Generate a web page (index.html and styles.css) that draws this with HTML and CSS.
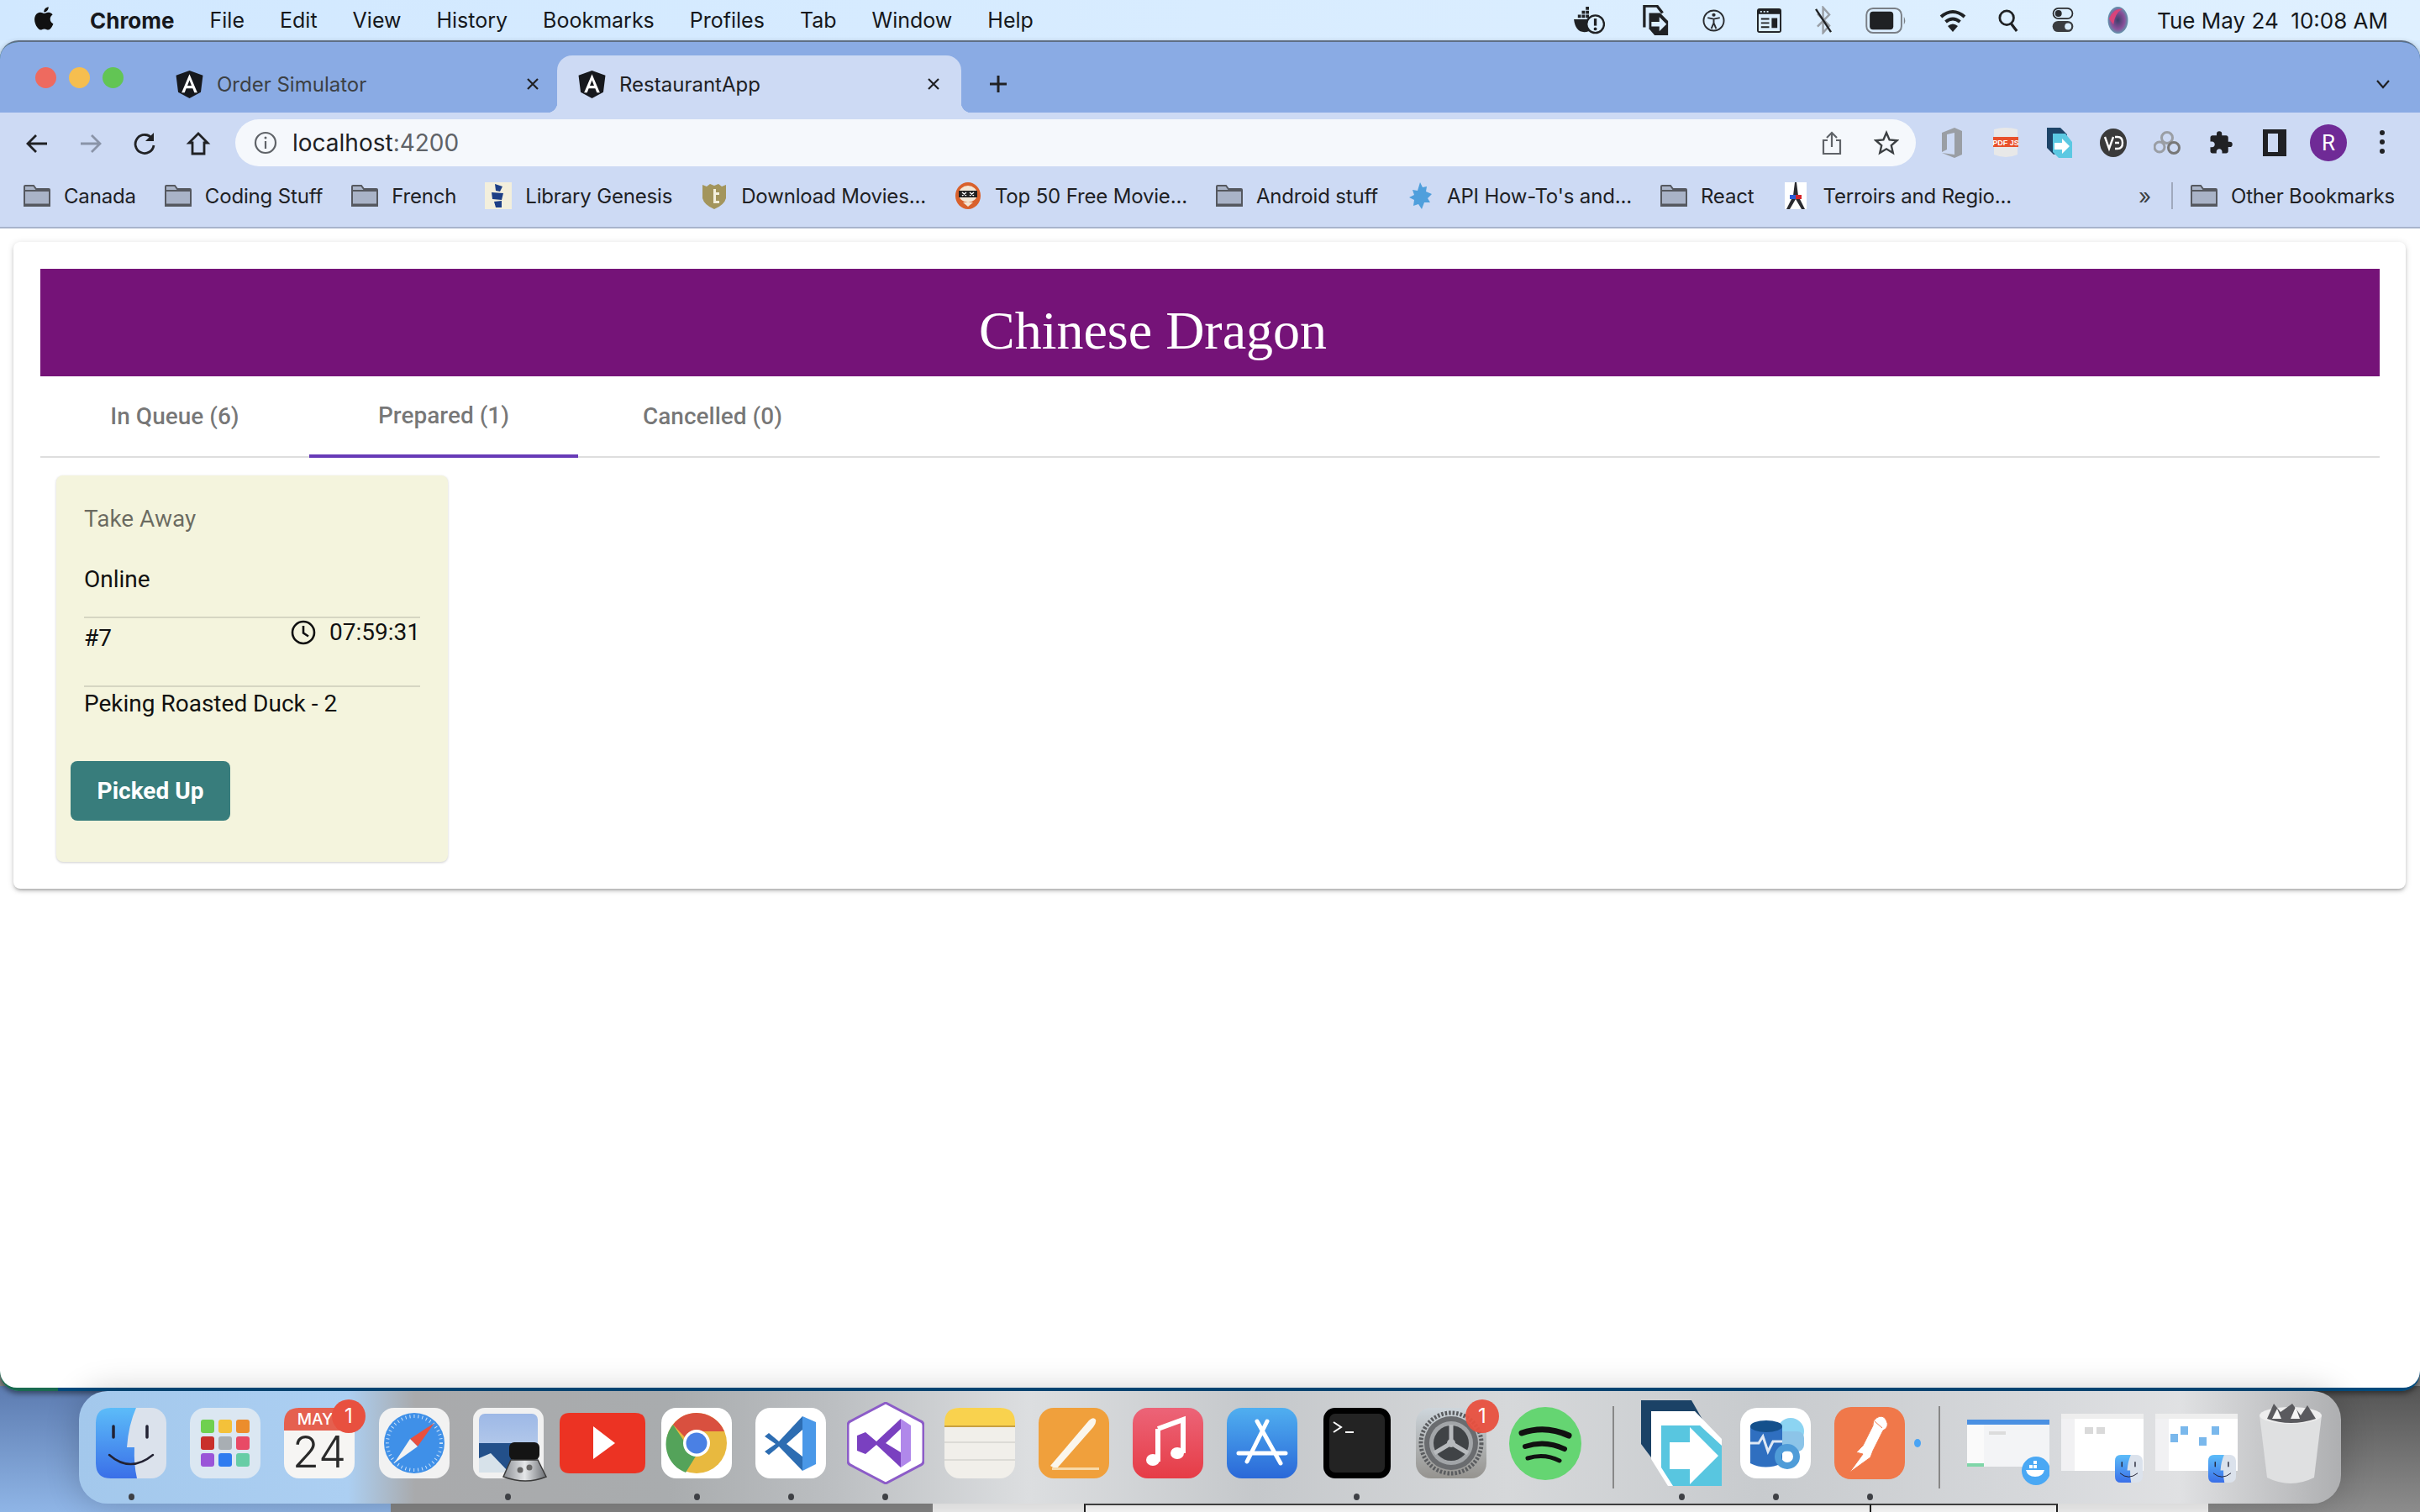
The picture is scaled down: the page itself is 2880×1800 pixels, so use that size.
FILE: index.html
```html
<!DOCTYPE html>
<html>
<head>
<meta name="viewport" content="width=device-width, initial-scale=1">
<title>RestaurantApp</title>
<link rel="stylesheet" href="styles.css">
</head>
<body>

<svg class="sprites" width="0" height="0">
  <defs>
    <linearGradient id="finderblue" x1="0" y1="0" x2="0" y2="1"><stop offset="0" stop-color="#5cbcf9"/><stop offset="1" stop-color="#3a6fe8"/></linearGradient>
    <symbol id="ng" viewBox="0 0 24 24">
      <path d="M12 0 23.6 4.2 21.8 18.8 12 24 2.2 18.8.4 4.2z" fill="#16181d"/>
      <path d="M12 3 5.2 19h2.6l1.4-3.6h5.6l1.4 3.6h2.6zM10.2 13 12 8.4 13.800 13z" fill="#fff"/>
    </symbol>
    <symbol id="folder" viewBox="0 0 32 26">
      <path d="M1 25V2q0-1 1-1h10l3 4h15q1 0 1 1v19z" fill="#a9b3c7" stroke="#55585f" stroke-width="2"/>
      <path d="M1 7h30" stroke="#55585f" stroke-width="2"/>
      <path d="M1 24h30" stroke="#55585f" stroke-width="3"/>
    </symbol>
    <symbol id="finder" viewBox="0 0 84 84">
      <rect width="84" height="84" rx="18" fill="#dbe2ec"/>
      <path d="M18 0h30q-9 20-11 47h9q-1 20 3 37H18Q0 84 0 66V18Q0 0 18 0z" fill="url(#finderblue)"/>
      <path d="M21 22v13M61 22v13" stroke="#223" stroke-width="3.500" stroke-linecap="round"/>
      <path d="M16 56q25 22 52 0" fill="none" stroke="#223" stroke-width="2.500" stroke-linecap="round"/>
    </symbol>
  </defs>
</svg>

<div class="desktop">

  <div class="bg-window">
    <div class="bg-cell bg-cell-a"></div>
    <div class="bg-cell bg-cell-b">them to reach and manage the application is 251045 file</div>
    <div class="bg-cell bg-cell-c">T</div>
  </div>

  <header class="menubar">
    <svg class="apple" viewBox="0 0 24 24"><path d="M17.05 12.54c-.03-2.6 2.12-3.85 2.22-3.91-1.21-1.77-3.09-2.01-3.76-2.04-1.6-.16-3.12.94-3.93.94-.81 0-2.06-.92-3.39-.89-1.74.03-3.35 1.01-4.25 2.57-1.81 3.14-.46 7.8 1.3 10.35.86 1.25 1.89 2.65 3.24 2.6 1.3-.05 1.79-.84 3.36-.84 1.57 0 2.01.84 3.39.81 1.4-.02 2.28-1.27 3.14-2.53.99-1.45 1.4-2.85 1.42-2.92-.03-.01-2.72-1.04-2.74-4.14zM14.47 4.9c.72-.87 1.2-2.08 1.07-3.28-1.03.04-2.28.69-3.02 1.55-.66.77-1.24 2-1.09 3.18 1.15.09 2.32-.58 3.04-1.45z" fill="#111"/></svg>
    <nav class="menu">
      <b>Chrome</b><span>File</span><span>Edit</span><span>View</span><span>History</span><span>Bookmarks</span><span>Profiles</span><span>Tab</span><span>Window</span><span>Help</span>
    </nav>
    <div class="status">
      <!-- docker with warning -->
      <svg class="docker" width="38" height="34" viewBox="0 0 40 36"><path d="M1 17h26q0 5-2 9l-1 4q-4 3-10 3Q3 33 1 17z" fill="#1f2124"/><path d="M6 11h4v4H6zM11 11h4v4h-4zM16 11h4v4h-4zM16 6h4v4h-4zM16 1h4v4h-4zM11 6h4v4h-4z" fill="#1f2124"/><circle cx="28" cy="23" r="11" fill="#dbeeff" stroke="#1f2124" stroke-width="2.500"/><path d="M28 16v9" stroke="#1f2124" stroke-width="3.500"/><circle cx="28" cy="29" r="2" fill="#1f2124"/></svg>
      <!-- arrow doc -->
      <svg width="32" height="36" viewBox="0 0 34 38"><path d="M2 28V1h16l7 9" fill="none" stroke="#1f2124" stroke-width="3.500"/><path d="M8 10h14l10 10v18H15l-7-8z" fill="#1f2124"/><path d="M11 21h10v-6l9 9-9 9v-6H11z" fill="#dbeeff"/></svg>
      <!-- accessibility -->
      <svg width="27" height="27" viewBox="0 0 28 28"><circle cx="14" cy="14" r="12.500" fill="none" stroke="#2a2c30" stroke-width="2"/><circle cx="14" cy="7" r="2.200" fill="#2a2c30"/><path d="M6.500 10.500 14 12l7.500-1.500M14 12v5l-3 7M14 17l3 7" fill="none" stroke="#2a2c30" stroke-width="2"/></svg>
      <!-- command window -->
      <svg width="29" height="29" viewBox="0 0 30 30"><rect width="30" height="30" rx="3" fill="#1f2124"/><rect x="2" y="7" width="26" height="21" fill="#dbeeff"/><path d="M5 12h10v2H5zM5 17h10v2H5zM5 22h10v2H5zM18 12h7v12h-7z" fill="#1f2124"/><path d="M4 3h2v2H4zM8 3h2v2H8zM12 3h2v2h-2z" fill="#dbeeff"/></svg>
      <!-- bluetooth off -->
      <svg width="23" height="34" viewBox="0 0 24 36"><path d="M4 10 19 25 11 34V2l8 9L4 26" fill="none" stroke="#999ea5" stroke-width="2.500"/><path d="M2 4 21 33" stroke="#1f2124" stroke-width="2.500"/></svg>
      <!-- battery -->
      <svg width="49" height="31" viewBox="0 0 50 32"><rect x="1" y="1" width="43" height="30" rx="8" fill="none" stroke="#7a7f86" stroke-width="2"/><rect x="5" y="5" width="29" height="22" rx="4" fill="#1f2124"/><path d="M47 11q3 5 0 10z" fill="#7a7f86"/></svg>
      <!-- wifi -->
      <svg width="32" height="30" viewBox="0 0 32 30"><path d="M2 11q14-12 28 0M7.500 17q8.500-7 17 0" fill="none" stroke="#1f2124" stroke-width="4"/><path d="M10 22q6-5 12 0l-6 7z" fill="#1f2124"/></svg>
      <!-- search -->
      <svg width="24" height="28" viewBox="0 0 26 30"><circle cx="11" cy="12" r="9" fill="none" stroke="#1f2124" stroke-width="3"/><path d="M17 20l7 9" stroke="#1f2124" stroke-width="3.500"/></svg>
      <!-- control centre -->
      <svg width="28" height="30" viewBox="0 0 28 34"><rect x="1" y="1" width="26" height="14" rx="7" fill="none" stroke="#2a2c30" stroke-width="2"/><circle cx="8" cy="8" r="4.500" fill="#2a2c30"/><rect y="18" width="28" height="15" rx="7.500" fill="#3a3c40"/><circle cx="21" cy="25.500" r="4.500" fill="#dbeeff"/></svg>
      <!-- siri -->
      <svg width="27" height="32" viewBox="0 0 28 36"><defs><radialGradient id="siri" cx=".5" cy=".5" r=".6"><stop offset="0" stop-color="#3a3f6a"/><stop offset=".55" stop-color="#8a4f9a"/><stop offset="1" stop-color="#4cc0b8"/></radialGradient></defs><ellipse cx="14" cy="18" rx="13.500" ry="18" fill="url(#siri)"/><path d="M2 16Q8 2 20 3 10 8 8 24z" fill="#d8447a"/></svg>
    </div>
    <div class="clock-text">Tue May 24&nbsp; 10:08 AM</div>
  </header>

  <div class="window">
    <div class="tabstrip">
      <div class="traffic"><i class="red"></i><i class="yellow"></i><i class="green"></i></div>
      <div class="tab">
        <svg class="fav"><use href="#ng"/></svg>
        <span class="tab-title">Order Simulator</span>
        <svg class="tab-x" viewBox="0 0 16 16"><path d="M2 2l12 12M14 2 2 14" stroke="#202124" stroke-width="2.200"/></svg>
      </div>
      <div class="tab tab-active">
        <svg class="fav"><use href="#ng"/></svg>
        <span class="tab-title">RestaurantApp</span>
        <svg class="tab-x" viewBox="0 0 16 16"><path d="M2 2l12 12M14 2 2 14" stroke="#202124" stroke-width="2.200"/></svg>
      </div>
      <svg class="tab-plus" viewBox="0 0 24 24"><path d="M12 2v20M2 12h20" stroke="#202124" stroke-width="3"/></svg>
      <svg class="tab-chev" viewBox="0 0 18 12"><path d="M2 2l7 8 7-8" fill="none" stroke="#202124" stroke-width="2.200"/></svg>
    </div>

    <div class="toolbar">
      <div class="nav-btns">
        <svg viewBox="0 0 30 30"><path d="M27 15H5M14 5 4 15l10 10" fill="none" stroke="#202124" stroke-width="2.800"/></svg>
        <svg viewBox="0 0 30 30"><path d="M3 15h22M16 5l10 10-10 10" fill="none" stroke="#8a94a8" stroke-width="2.800"/></svg>
        <svg viewBox="0 0 30 30"><path d="M24 9A11 11 0 1 0 26 17" fill="none" stroke="#202124" stroke-width="2.800"/><path d="M26 2v10H16z" fill="#202124"/></svg>
        <svg viewBox="0 0 30 30"><path d="M15 3 4 14h4v13h14V14h4z" fill="none" stroke="#202124" stroke-width="2.800"/></svg>
      </div>
      <div class="omnibox">
        <svg class="info" viewBox="0 0 28 28"><circle cx="14" cy="14" r="12" fill="none" stroke="#5f6368" stroke-width="2.200"/><path d="M14 12v9" stroke="#5f6368" stroke-width="2.200"/><circle cx="14" cy="8" r="1.500" fill="#5f6368"/></svg>
        <span class="url">localhost<span class="url-port">:4200</span></span>
        <svg class="share" viewBox="0 0 24 30"><path d="M12 20V3M6 9l6-6 6 6" fill="none" stroke="#5f6368" stroke-width="2.200"/><path d="M7 12H2v16h20V12h-5" fill="none" stroke="#5f6368" stroke-width="2.200"/></svg>
        <svg class="star" viewBox="0 0 30 30"><path d="M15 3l3.600 8.400 9 .8-6.800 6 2 8.800-7.800-4.700L7.200 27l2-8.800-6.800-6 9-.8z" fill="none" stroke="#3c4043" stroke-width="2.400"/></svg>
      </div>
      <div class="ext-btns">
        <svg width="26" height="36" viewBox="0 0 26 36"><path d="M1 6 16 0l9 4v28l-9 4-15-6 15 2V6L7 8v18l-6 3z" fill="#9a9ea4"/></svg>
        <svg width="30" height="36" viewBox="0 0 30 36"><path d="M1 2q14-4 28 0v30q-14 6-28 0z" fill="#e8e8e8"/><rect y="11" width="30" height="12" fill="#e8502a"/><text x="15" y="21" class="pdf-text">PDF JS</text></svg>
        <svg width="30" height="36" viewBox="0 0 30 36"><path d="M0 0h16l8 8v20L8 32 0 24z" fill="#1d4468"/><path d="M7 7h15l8 10v19H14l-7-7z" fill="#5bc8e2"/><path d="M9 18h9v-5l9 9-9 9v-5H9z" fill="#fff"/></svg>
        <svg width="32" height="34" viewBox="0 0 32 34"><ellipse cx="16" cy="17" rx="16" ry="17" fill="#3a3a3a"/><path d="M6 10l5 14 5-14M18 10h3q6 0 6 7t-6 7h-3M18 17h5" fill="none" stroke="#fff" stroke-width="2.400"/></svg>
        <svg width="32" height="30" viewBox="0 0 32 30"><circle cx="16" cy="9" r="6.500" fill="none" stroke="#9a9ea4" stroke-width="3"/><circle cx="7" cy="20" r="6" fill="none" stroke="#9a9ea4" stroke-width="3"/><circle cx="24" cy="21" r="6.500" fill="none" stroke="#777" stroke-width="3"/></svg>
        <svg width="30" height="32" viewBox="0 0 24 24"><path d="M20.500 11H19V7c0-1.100-.9-2-2-2h-4V3.500a2.500 2.500 0 0 0-5 0V5H4c-1.100 0-2 .9-2 2v3.800h1.500c1.500 0 2.700 1.200 2.700 2.700S5 16.200 3.500 16.200H2V20c0 1.100.9 2 2 2h3.800v-1.500c0-1.500 1.200-2.700 2.700-2.700s2.700 1.200 2.700 2.700V22H17c1.100 0 2-.9 2-2v-4h1.500a2.500 2.500 0 0 0 0-5z" fill="#202124"/></svg>
        <svg width="28" height="32" viewBox="0 0 28 32"><path d="M0 0h28v32H0zM6 5v22h12V5z" fill="#202124" fill-rule="evenodd"/></svg>
        <div class="avatar">R</div>
        <svg width="8" height="32" viewBox="0 0 8 32"><circle cx="4" cy="4" r="3" fill="#202124"/><circle cx="4" cy="15" r="3" fill="#202124"/><circle cx="4" cy="26" r="3" fill="#202124"/></svg>
      </div>
    </div>

    <div class="bookmarks">
      <div class="bm"><svg class="bm-ico"><use href="#folder"/></svg>Canada</div>
      <div class="bm"><svg class="bm-ico"><use href="#folder"/></svg>Coding Stuff</div>
      <div class="bm"><svg class="bm-ico"><use href="#folder"/></svg>French</div>
      <div class="bm"><svg class="bm-ico" viewBox="0 0 32 32"><rect width="32" height="32" fill="#f3efdc"/><path d="M12 2l9 3-3 6-5-1zM8 12l14 1-2 8-11-1zM11 23l9-1v8l-7 0z" fill="#1d3f86"/></svg>Library Genesis</div>
      <div class="bm"><svg class="bm-ico" viewBox="0 0 32 32"><path d="M2 3l5 2 4-3 5 2 5-2 4 3 5-2v16q-2 8-14 13Q4 27 2 19z" fill="#a3955c"/><path d="M15 8h3v4h4v3h-4v7h4v3h-7z" fill="#f3efdc"/></svg>Download Movies...</div>
      <div class="bm"><svg class="bm-ico" viewBox="0 0 32 32"><ellipse cx="16" cy="16" rx="15" ry="16" fill="#d9612c"/><ellipse cx="16" cy="14" rx="11" ry="10" fill="#f3e7d6"/><path d="M5 10h22v8H5z" fill="#222"/><path d="M9 12l5 4M14 12l-5 4M18 12l5 4M23 12l-5 4" stroke="#fff" stroke-width="1.500"/><path d="M10 24h12l-6 5z" fill="#f3e7d6"/></svg>Top 50 Free Movie...</div>
      <div class="bm"><svg class="bm-ico"><use href="#folder"/></svg>Android stuff</div>
      <div class="bm"><svg class="bm-ico" viewBox="0 0 32 32"><path d="M16 0l3 6 5-1-1 6 7 3-5 5 3 5-7 0-3 8-4-6-6 2 1-7-6-3 6-3-2-6 6 1z" fill="#4f9fdc"/></svg>API How-To's and...</div>
      <div class="bm"><svg class="bm-ico"><use href="#folder"/></svg>React</div>
      <div class="bm"><svg class="bm-ico" viewBox="0 0 32 32"><rect x="3" width="26" height="32" fill="#fff"/><path d="M15 0h2l2 16 8 16h-4l-7-12-7 12H5l8-16z" fill="#2b2b30"/><rect x="9" y="15" width="7" height="5" fill="#2b5bd6"/><rect x="16" y="15" width="7" height="5" fill="#d8232a"/></svg>Terroirs and Regio...</div>
      <div class="bm-more">»</div>
      <div class="bm-sep"></div>
      <div class="bm"><svg class="bm-ico"><use href="#folder"/></svg>Other Bookmarks</div>
    </div>

    <main class="page">
      <section class="outer-card">
        <h1 class="brand"><span>Chinese Dragon</span></h1>
        <div class="tab-group">
          <div class="mat-tab">In Queue (6)</div>
          <div class="mat-tab mat-tab-on">Prepared (1)</div>
          <div class="mat-tab">Cancelled (0)</div>
        </div>
        <article class="order">
          <div class="order-sub">Take Away</div>
          <div class="order-line order-source">Online</div>
          <div class="order-meta">
            <span class="order-no">#7</span>
            <span class="order-time">
              <svg class="clock" viewBox="0 0 30 30"><circle cx="15" cy="15" r="13" fill="none" stroke="#111" stroke-width="2.600"/><path d="M15 7v8.500l6 4" fill="none" stroke="#111" stroke-width="2.600"/></svg>
              07:59:31
            </span>
          </div>
          <div class="order-line order-item">Peking Roasted Duck - 2</div>
          <button class="picked">Picked Up</button>
        </article>
      </section>
    </main>
  </div>

  <footer class="dock">
    <div class="slot run"><div class="slot-ico"><svg width="84" height="84"><use href="#finder"/></svg></div></div>
    <div class="slot"><div class="slot-ico">
      <svg width="84" height="84" viewBox="0 0 84 84"><rect width="84" height="84" rx="18" fill="#dbe7f2"/><rect x="13" y="14" width="16" height="16" rx="3" fill="#6fd04f"/><rect x="34" y="14" width="16" height="16" rx="3" fill="#f4c13a"/><rect x="55" y="14" width="16" height="16" rx="3" fill="#ec8d2c"/><rect x="13" y="34" width="16" height="16" rx="3" fill="#c9302c"/><rect x="34" y="34" width="16" height="16" rx="3" fill="#a8aeb3"/><rect x="55" y="34" width="16" height="16" rx="3" fill="#e84a66"/><rect x="13" y="54" width="16" height="16" rx="3" fill="#9a55d8"/><rect x="34" y="54" width="16" height="16" rx="3" fill="#2f7cf0"/><rect x="55" y="54" width="16" height="16" rx="3" fill="#67cda6"/></svg>
    </div></div>
    <div class="slot"><div class="slot-ico">
      <svg class="over" width="84" height="84" viewBox="0 0 84 84"><rect width="84" height="84" rx="18" fill="#f6f5f3"/><path d="M0 27V18Q0 0 18 0h48q18 0 18 18v9z" fill="#e5604f"/><text x="37" y="20" class="cal-mon">MAY</text><text x="42" y="71" class="cal-day">24</text><circle cx="77" cy="10" r="20" fill="#e8503f"/><text x="77" y="18" class="badge-n">1</text></svg>
    </div></div>
    <div class="slot"><div class="slot-ico">
      <svg width="84" height="84" viewBox="0 0 84 84"><rect width="84" height="84" rx="18" fill="#f2f2f2"/><circle cx="42" cy="42" r="36" fill="#3f90e8"/><circle cx="42" cy="42" r="32" fill="none" stroke="#cfe3f8" stroke-width="4" stroke-dasharray="1 4"/><path d="M66 18 37 37l9 9z" fill="#e8503f"/><path d="M18 66l19-29 9 9z" fill="#f2f2f2"/></svg>
    </div></div>
    <div class="slot run"><div class="slot-ico">
      <svg class="over" width="84" height="84" viewBox="0 0 84 84"><defs><linearGradient id="psky" x1="0" y1="0" x2="0" y2="1"><stop offset="0" stop-color="#9db8e6"/><stop offset="1" stop-color="#c4d6ee"/></linearGradient><linearGradient id="pjar" x1="0" y1="0" x2="1" y2="0"><stop offset="0" stop-color="#8a8d92"/><stop offset=".5" stop-color="#e4e6e8"/><stop offset="1" stop-color="#6a6d72"/></linearGradient></defs><rect width="84" height="84" rx="14" fill="#f1f1f1"/><rect x="7" y="7" width="70" height="70" rx="7" fill="url(#psky)"/><path d="M7 42h40v35H7z" fill="#23508a"/><path d="M7 60l14-6 22 23H7z" fill="#d7e2ea"/><rect x="43" y="41" width="36" height="21" rx="6" fill="#141414"/><path d="M45 62h32l10 20q-24 10-51 0z" fill="url(#pjar)" stroke="#3a3a3a" stroke-width="1.500"/><circle cx="56" cy="74" r="3.500" fill="#666"/><circle cx="67" cy="71" r="3.500" fill="#666"/></svg>
    </div></div>
    <div class="slot"><div class="slot-ico">
      <svg width="102" height="72" viewBox="0 0 102 72"><path d="M12 0h78q12 0 12 12v48q0 12-12 12H12Q0 72 0 60V12Q0 0 12 0z" fill="#ec3323"/><path d="M40 16v39l26-19z" fill="#fff"/></svg>
    </div></div>
    <div class="slot run"><div class="slot-ico">
      <svg width="84" height="84" viewBox="0 0 84 84"><rect width="84" height="84" rx="18" fill="#fff"/><circle cx="42" cy="42" r="36" fill="#e8b93f"/><path d="M42 6a36 36 0 0 1 33 22H42a14 14 0 0 0-13 8L14 20A36 36 0 0 1 42 6z" fill="#d9503f"/><path d="M14 20l16 24a14 14 0 0 0 12 12L29 77A36 36 0 0 1 14 20z" fill="#54a35a"/><circle cx="42" cy="42" r="16" fill="#fff"/><circle cx="42" cy="42" r="12.500" fill="#4a80e4"/></svg>
    </div></div>
    <div class="slot run"><div class="slot-ico">
      <svg width="84" height="84" viewBox="0 0 84 84"><rect width="84" height="84" rx="18" fill="#fff"/><path d="M56 10 72 17v50l-16 8z" fill="#4a98e8"/><path d="M56 10 28 40 16 30l-5 4 13 9-13 9 5 4 12-10 28 29V58L37 43l19-17z" fill="#2d6db2"/></svg>
    </div></div>
    <div class="slot run"><div class="slot-ico">
      <svg width="92" height="98" viewBox="0 0 92 98"><path d="M46 1 88 23q3 1 3 5v42q0 4-3 5L46 97 4 75q-3-1-3-5V28q0-4 3-5z" fill="#fff" stroke="#8c5cc8" stroke-width="3"/><path d="M64 20 76 28v42l-12 8z" fill="#b088ea"/><path d="M64 20 35 47 22 36l-10 4v18l10 4 13-11 29 27V60L46 49l18-17z" fill="#7a40c0"/></svg>
    </div></div>
    <div class="slot"><div class="slot-ico">
      <svg width="84" height="84" viewBox="0 0 84 84"><rect width="84" height="84" rx="18" fill="#f1efea"/><path d="M0 21V18Q0 0 18 0h48q18 0 18 18v3z" fill="#f9d24e"/><path d="M0 21h84v2H0z" fill="#c8a040"/><path d="M0 41h84M0 62h84" stroke="#dcdbd6" stroke-width="2"/></svg>
    </div></div>
    <div class="slot"><div class="slot-ico">
      <svg width="84" height="84" viewBox="0 0 84 84"><rect width="84" height="84" rx="18" fill="#f0a03c"/><path d="M14 69 60 15q5-5 8-1 1 4-3 9L21 73z" fill="#fbf6ec"/><path d="M16 71h56v3H16z" fill="#f8d9a8"/></svg>
    </div></div>
    <div class="slot"><div class="slot-ico">
      <svg width="84" height="84" viewBox="0 0 84 84"><defs><linearGradient id="mus" x1="0" y1="0" x2="0" y2="1"><stop offset="0" stop-color="#ec6478"/><stop offset="1" stop-color="#e63c46"/></linearGradient></defs><rect width="84" height="84" rx="18" fill="url(#mus)"/><path d="M30 25 60 14v40" fill="none" stroke="#fff" stroke-width="6"/><path d="M30 25v39" stroke="#fff" stroke-width="6"/><ellipse cx="24" cy="62" rx="8" ry="7" fill="#fff"/><ellipse cx="53" cy="54" rx="8" ry="7" fill="#fff"/></svg>
    </div></div>
    <div class="slot"><div class="slot-ico">
      <svg width="84" height="84" viewBox="0 0 84 84"><defs><linearGradient id="apps" x1="0" y1="0" x2="0" y2="1"><stop offset="0" stop-color="#50aff0"/><stop offset="1" stop-color="#2a68d8"/></linearGradient></defs><rect width="84" height="84" rx="18" fill="url(#apps)"/><path d="M36 16l28 50M48 16 24 64M14 54h56" stroke="#fff" stroke-width="5" stroke-linecap="round"/></svg>
    </div></div>
    <div class="slot run"><div class="slot-ico">
      <svg width="80" height="84" viewBox="0 0 80 84"><rect width="80" height="84" rx="14" fill="#000"/><rect x="7" y="7" width="66" height="70" rx="7" fill="#232323"/><path d="M12 17l9 6-9 6" fill="none" stroke="#fff" stroke-width="2"/><path d="M26 29h10" stroke="#fff" stroke-width="2"/></svg>
    </div></div>
    <div class="slot"><div class="slot-ico">
      <svg class="over" width="84" height="84" viewBox="0 0 84 84"><defs><linearGradient id="prefs" x1="0" y1="0" x2="0" y2="1"><stop offset="0" stop-color="#ced6dc"/><stop offset="1" stop-color="#95938f"/></linearGradient></defs><rect width="84" height="84" rx="18" fill="url(#prefs)"/><circle cx="42" cy="42" r="36" fill="none" stroke="#5a5c5f" stroke-width="5" stroke-dasharray="2.500 2"/><circle cx="42" cy="42" r="32" fill="#6a6c6f"/><circle cx="42" cy="42" r="26" fill="#a2a5a8"/><circle cx="42" cy="42" r="21" fill="#404346"/><path d="M42 42V20M42 42 62 54M42 42 22 54" stroke="#b7babd" stroke-width="5"/><circle cx="42" cy="42" r="5" fill="#b7babd"/><circle cx="79" cy="10" r="20" fill="#e8503f" fill-opacity=".95"/><text x="79" y="18" class="badge-n">1</text></svg>
    </div></div>
    <div class="slot"><div class="slot-ico">
      <svg width="86" height="87" viewBox="0 0 86 87"><ellipse cx="43" cy="43.500" rx="43" ry="43.500" fill="#65d572"/><path d="M15 31q28-10 56 3" fill="none" stroke="#111" stroke-width="7" stroke-linecap="round"/><path d="M19 47q24-8 47 3" fill="none" stroke="#111" stroke-width="6" stroke-linecap="round"/><path d="M22 61q20-6 38 3" fill="none" stroke="#111" stroke-width="5" stroke-linecap="round"/></svg>
    </div></div>
    <div class="dock-sep"></div>
    <div class="slot run"><div class="slot-ico">
      <svg width="96" height="102" viewBox="0 0 96 102"><path d="M0 0h60l16 28v30L30 92 0 52z" fill="#1b4266"/><path d="M12 13h52l32 33v56H32L12 70z" fill="#fff"/><path d="M24 30h46l26 24v48H38L24 80z" fill="#58c6e0"/><path d="M34 50h24V32l34 34-34 34V82H34z" fill="#fff"/></svg>
    </div></div>
    <div class="slot run"><div class="slot-ico">
      <svg width="84" height="84" viewBox="0 0 84 84"><rect width="84" height="84" rx="20" fill="#fff"/><circle cx="60" cy="28" r="16" fill="#8cd4f2"/><rect x="44" y="28" width="32" height="24" rx="8" fill="#8cc4e8"/><path d="M12 22q20-9 38 0v44q-20 9-38 0z" fill="#2f6fc0"/><ellipse cx="31" cy="22" rx="19" ry="7" fill="#14508c"/><path d="M12 42h10l5-8 6 18 6-12h11" fill="none" stroke="#dfe8f4" stroke-width="3"/><circle cx="56" cy="58" r="11" fill="none" stroke="#4f9cd8" stroke-width="8"/></svg>
    </div></div>
    <div class="slot run"><div class="slot-ico">
      <svg width="84" height="86" viewBox="0 0 84 86"><rect width="84" height="86" rx="20" fill="#f0784a"/><path d="M58 28q8-4 4-12t-12-3q-5 4-4 9L34 46l-8 8 8 2-16 22 25-18 3-8zM48 17l9 8" fill="#fff" stroke="#f0784a" stroke-width="1"/></svg>
      <svg class="stray" width="8" height="10" viewBox="0 0 8 10"><ellipse cx="4" cy="5" rx="4" ry="5" fill="#4aa4f4"/></svg>
    </div></div>
    <div class="dock-sep dock-sep-2"></div>
    <div class="slot"><div class="slot-ico">
      <svg class="thumb-a" width="98" height="92" viewBox="0 0 98 92"><rect width="98" height="56" fill="#f3f4f6"/><rect width="98" height="6" fill="#4a90e2"/><rect y="6" width="20" height="50" fill="#fafafa"/><rect y="52" width="20" height="4" fill="#7fd6a8"/><rect x="26" y="14" width="20" height="4" fill="#dcdcdc"/><circle cx="82" cy="61" r="17" fill="#4aa8f4"/><path d="M70 60h22q-2 8-11 8-9 0-11-8z" fill="#fff"/><path d="M74 54h4v4h-4zM79 54h4v4h-4zM79 49h4v4h-4z" fill="#fff"/></svg>
    </div></div>
    <div class="slot"><div class="slot-ico">
      <svg class="thumb-b" width="98" height="84" viewBox="0 0 98 84"><rect width="98" height="68" fill="#fff"/><rect width="98" height="6" fill="#eeeeee"/><rect y="6" width="16" height="62" fill="#f1f1f3"/><path d="M28 16h10v8H28zM42 16h10v8H42z" fill="#dadada"/><svg x="64" y="49" width="33" height="33"><use href="#finder"/></svg></svg>
    </div></div>
    <div class="slot"><div class="slot-ico">
      <svg class="thumb-b" width="98" height="84" viewBox="0 0 98 84"><rect width="98" height="68" fill="#fff"/><rect width="98" height="6" fill="#eeeeee"/><rect y="6" width="16" height="62" fill="#f1f1f3"/><path d="M18 24h9v10h-9zM30 15h9v10h-9zM52 28h9v10h-9zM67 15h9v10h-9z" fill="#7ab8ec"/><svg x="63" y="49" width="33" height="33"><use href="#finder"/></svg></svg>
    </div></div>
    <div class="slot"><div class="slot-ico">
      <svg width="76" height="98" viewBox="0 0 76 98"><path d="M1 16q37-12 74 0l-9 74q-28 14-56 0z" fill="#dfe0e1"/><ellipse cx="38" cy="16" rx="37" ry="10" fill="#eee"/><path d="M10 20l8-18 8 10 14-10 10 14 8-12 10 16q-30 10-58 0z" fill="#5a5a5e"/><path d="M16 20l6-12 5 12zM38 20l6-14 5 14z" fill="#f4f4f4"/></svg>
    </div></div>
  </footer>

</div>

</body>
</html>
```

FILE: styles.css
```css
* {
  box-sizing: border-box;
}

body, html {
  margin: 0;
  height: 100%;
  font-family: Roboto, "Liberation Sans", sans-serif;
}

.sprites {
  display: block;
  height: 0;
}

/* the desktop behind the browser */
.desktop {
  position: relative;
  width: 2880px;
  height: 1800px;
  overflow: hidden;
  background:
    linear-gradient(#d6ebff, #d6ebff) 0 0 / 100% 90px no-repeat,
    linear-gradient(#5c7bb0, #8fb5e6) 0 1650px / 465px 150px no-repeat,
    linear-gradient(#545454, #8c8c8c) 100% 1650px / 252px 150px no-repeat,
    #858585;
}

.bg-window {
  position: absolute;
  left: 1110px;
  top: 1790px;
  width: 1518px;
  height: 10px;
  display: flex;
  background: #f4f4f4;
}

.bg-cell {
  height: 10px;
  padding: 6px 10px 0;
  font: 24px "Liberation Serif", serif;
  border-top: 2px solid #444;
  overflow: hidden;
  white-space: nowrap;
  background: #fff;
}

.bg-cell-a {
  width: 180px;
  border-top: 0;
  background: #f4f4f4;
}

.bg-cell-b {
  width: 937px;
  border-left: 2px solid #222;
  border-right: 2px solid #222;
}

.bg-cell-c {
  width: 222px;
  border-right: 2px solid #222;
}

/* mac menu bar */
.menubar {
  height: 48px;
  display: flex;
  align-items: center;
  padding-left: 40px;
  color: #16181c;
  background: linear-gradient(90deg, #d1e8ff, #dff0ff);
  font: 26px Inter, sans-serif;
}

.apple {
  width: 32px;
  height: 34px;
  margin: -4px 0 0 -3px;
}

.menu {
  display: flex;
  gap: 42px;
  margin-left: 38px;
  font-size: 25px;
}

.menu b {
  font-size: 26px;
  font-weight: 700;
}

.status {
  margin-left: auto;
  display: flex;
  align-items: center;
  gap: 38.500px;
}

.docker {
  margin-right: 7px;
}

.clock-text {
  margin: 0 38px 0 33px;
  white-space: nowrap;
}

/* chrome window */
.window {
  position: relative;
  height: 1608px;
  border-top: 2px solid #5f6f84;
  border-radius: 22px;
  overflow: hidden;
  display: flex;
  flex-direction: column;
  background: linear-gradient(90deg, #1a6b50 69px, #004a7c 69px);
  box-shadow: 0 3px 6px rgba(0, 0, 0, 0.45);
}

.tabstrip {
  height: 84px;
  display: flex;
  align-items: flex-end;
  background: #8aabe4;
  flex: none;
}

.traffic {
  display: flex;
  gap: 15px;
  width: 190px;
  padding: 0 0 29px 42px;
  flex: none;
}

.traffic i {
  width: 25px;
  height: 25px;
  border-radius: 50%;
}

.red { background: #ee6a5f; }
.yellow { background: #f6be4f; }
.green { background: #62c554; }

.tab {
  width: 473px;
  height: 68px;
  display: flex;
  align-items: center;
  padding: 0 21px 0 19px;
  font: 24px Inter, sans-serif;
  color: #3c4043;
  flex: none;
  position: relative;
}

.tab-active {
  width: 481px;
  border-radius: 18px 18px 0 0;
  background: #cddaf4;
  color: #202124;
  padding: 0 25px 0 25px;
}

/* flared feet of the active tab */
.tab-active::before,
.tab-active::after {
  content: "";
  position: absolute;
  bottom: 0;
  width: 12px;
  height: 12px;
}

.tab-active::before {
  left: -12px;
  background: radial-gradient(circle at 0 0, transparent 12px, #cddaf4 12.500px);
}

.tab-active::after {
  right: -12px;
  background: radial-gradient(circle at 100% 0, transparent 12px, #cddaf4 12.500px);
}

.fav {
  width: 33px;
  height: 33px;
  flex: none;
  margin-right: 16px;
}

.tab-title {
  flex: 1;
  white-space: nowrap;
}

.tab-x {
  width: 16px;
  height: 16px;
}

.tab-plus {
  width: 24px;
  height: 24px;
  margin: 0 0 22px 32px;
}

.tab-chev {
  width: 18px;
  height: 12px;
  margin: 0 35px 28px auto;
}

.toolbar {
  height: 72px;
  display: flex;
  align-items: flex-start;
  background: #cddaf4;
  padding-top: 8px;
  flex: none;
}

.nav-btns {
  display: flex;
  align-items: center;
  gap: 34px;
  width: 280px;
  height: 58px;
  padding-left: 29px;
  flex: none;
}

.nav-btns svg {
  width: 30px;
  height: 30px;
}

.omnibox {
  width: 2000px;
  height: 56px;
  border-radius: 28px;
  background: #f5f8fc;
  display: flex;
  align-items: center;
  padding: 0 20px 0 22px;
  flex: none;
}

.info {
  width: 28px;
  height: 28px;
  margin-right: 18px;
}

.url {
  font: 28px Inter, sans-serif;
  color: #202124;
}

.url-port {
  color: #5f6368;
}

.share {
  width: 24px;
  height: 30px;
  margin-left: auto;
}

.star {
  width: 30px;
  height: 30px;
  margin-left: 38px;
}

.ext-btns {
  display: grid;
  grid-template-columns: repeat(9, 64px);
  align-items: center;
  justify-items: center;
  height: 56px;
  padding-left: 11px;
}

.avatar {
  width: 44px;
  height: 44px;
  border-radius: 50%;
  background: #6f2a96;
  color: #fff;
  font-size: 26px;
  line-height: 44px;
  text-align: center;
}

.pdf-text {
  font: bold 9px "Liberation Sans", sans-serif;
  fill: #fff;
  text-anchor: middle;
}

.bookmarks {
  height: 66px;
  display: flex;
  align-items: center;
  padding: 0 13px 10px 11px;
  background: #cddaf4;
  border-bottom: 2px solid #a8b4cc;
  font: 24px Inter, sans-serif;
  letter-spacing: -0.17px;
  color: #202124;
  white-space: nowrap;
  flex: none;
}

.bm {
  display: flex;
  align-items: center;
  gap: 16px;
  padding: 0 17px;
}

.bm-ico {
  width: 32px;
  height: 32px;
  flex: none;
}

.bm-more {
  margin-left: auto;
  margin-right: 24px;
  font-size: 26px;
  color: #3c4043;
}

.bm-sep {
  width: 2px;
  height: 32px;
  margin-right: 4px;
  background: #a0a9bd;
}

/* the app itself */
.page {
  flex: 1;
  margin-bottom: 4px;
  padding-top: 16px;
  background: #fff;
  border-radius: 0 0 20px 20px;
}

.outer-card {
  margin: 0 17px 0 16px;
  padding: 32px 31px 32px 32px;
  border-radius: 8px;
  background: #fff;
  box-shadow: 0 3px 3px -2px rgba(0, 0, 0, 0.2), 0 3px 4px 0 rgba(0, 0, 0, 0.14), 0 1px 8px 0 rgba(0, 0, 0, 0.12);
}

.brand {
  height: 128px;
  margin: 0;
  padding: 20px 136px 0 0;
  display: flex;
  align-items: center;
  justify-content: center;
  background: #751378;
  color: #fff;
  font: 400 64px "Liberation Serif", serif;
}

.tab-group {
  display: flex;
  height: 97px;
  border-bottom: 2px solid #dedede;
}

.mat-tab {
  width: 320px;
  display: flex;
  align-items: center;
  justify-content: center;
  font-size: 28px;
  font-weight: 500;
  color: rgba(0, 0, 0, 0.54);
}

.mat-tab-on {
  height: 97px;
  border-bottom: 4px solid #673ab7;
}

.order {
  width: 466px;
  height: 460px;
  margin: 21px 0 0 19px;
  padding: 32px 33px 0 33px;
  border-radius: 8px;
  background: #f4f4dd;
  font-size: 28px;
  color: #111;
  box-shadow: 0 1px 3px rgba(0, 0, 0, 0.2);
}

.order-sub {
  height: 40px;
  line-height: 40px;
  color: rgba(0, 0, 0, 0.56);
}

.order-line {
  line-height: 40px;
}

.order-source {
  margin-top: 32px;
}

.order-meta {
  display: flex;
  justify-content: space-between;
  align-items: flex-start;
  height: 84px;
  margin-top: 24px;
  border-top: 2px solid #d6d6c2;
  border-bottom: 2px solid #d6d6c2;
}

.order-no {
  line-height: 48px;
}

.order-time {
  display: flex;
  align-items: center;
  gap: 16px;
  line-height: 34px;
  height: 34px;
}

.clock {
  width: 30px;
  height: 30px;
}

.picked {
  display: block;
  width: 190px;
  height: 71px;
  margin: 48px 0 0 -16px;
  border: none;
  border-radius: 8px;
  background: #387d7c;
  color: #fff;
  font: 700 28px Roboto, sans-serif;
}

/* dock, sits over the window */
.dock {
  position: absolute;
  left: 94px;
  top: 1656px;
  width: 2692px;
  height: 134px;
  padding-left: 6px;
  display: flex;
  border-radius: 34px;
  background: linear-gradient(90deg, #a3c8ec 0, #accff2 320px, #a9aaac 400px, #a9acae 700px, #bcbfc2 900px, #dcdee0 1130px, #c5c8cb 1400px, #d6d8da 1700px, #c8cbce 2000px, #d7d9dc 2350px, #e0e1e3 2500px, #aeafb1 2692px);
  box-shadow: 0 0 40px rgba(0, 0, 0, 0.2);
}

.slot {
  width: 112.200px;
  height: 134px;
  flex: none;
  position: relative;
}

.slot-ico {
  height: 124px;
  display: flex;
  align-items: center;
  justify-content: center;
}

.over {
  overflow: visible;
}

.cal-mon {
  font: 500 19px Inter, sans-serif;
  fill: #fff;
  text-anchor: middle;
}

.cal-day {
  font: 300 52px Inter, sans-serif;
  fill: #2a2a2a;
  text-anchor: middle;
}

.badge-n {
  font: 24px Inter, sans-serif;
  fill: #fff;
  text-anchor: middle;
}

/* running indicator */
.run::after {
  content: "";
  display: block;
  width: 7px;
  height: 8px;
  margin: -2px auto 0;
  border-radius: 50%;
  background: #3e4045;
}

.stray {
  position: absolute;
  right: -4px;
  top: 57px;
}

.dock-sep {
  width: 50px;
  height: 98px;
  margin-top: 18px;
  flex: none;
  background: linear-gradient(#888, #888) center / 2px 100% no-repeat;
}

.dock-sep-2 {
  width: 52px;
}

.thumb-a {
  margin-top: 36px;
}

.thumb-b {
  margin-top: 14px;
}
```
